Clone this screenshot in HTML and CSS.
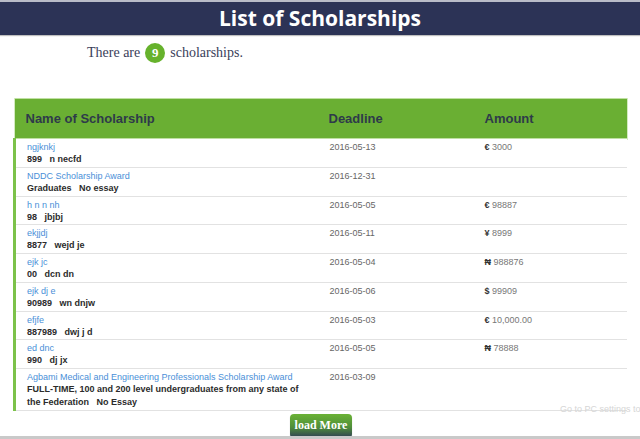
FILE: index.html
```html
<!DOCTYPE html>
<html lang="en">
<head>
<meta charset="utf-8">
<title>List of Scholarships</title>
<link rel="stylesheet" href="styles.css">
</head>
<body>
<header class="topbar"><h1 class="title">List of Scholarships</h1></header>
<p class="count">There are <span class="badge">9</span> scholarships.</p>
<div class="table-wrap">
  <table class="sch">
    <thead>
      <tr><th class="c-name">Name of Scholarship</th><th class="c-date">Deadline</th><th class="c-amt">Amount</th></tr>
    </thead>
    <tbody>
      <tr><td class="c-name"><a class="link">ngjknkj</a><div class="info">899&nbsp;&nbsp;&nbsp;n necfd</div></td><td class="c-date">2016-05-13</td><td class="c-amt"><b>€</b> 3000</td></tr>
      <tr><td class="c-name"><a class="link">NDDC Scholarship Award</a><div class="info">Graduates&nbsp;&nbsp;&nbsp;No essay</div></td><td class="c-date">2016-12-31</td><td class="c-amt"></td></tr>
      <tr><td class="c-name"><a class="link">h n n nh</a><div class="info">98&nbsp;&nbsp;&nbsp;jbjbj</div></td><td class="c-date">2016-05-05</td><td class="c-amt"><b>€</b> 98887</td></tr>
      <tr><td class="c-name"><a class="link">ekjjdj</a><div class="info">8877&nbsp;&nbsp;&nbsp;wejd je</div></td><td class="c-date">2016-05-11</td><td class="c-amt"><b>¥</b> 8999</td></tr>
      <tr><td class="c-name"><a class="link">ejk jc</a><div class="info">00&nbsp;&nbsp;&nbsp;dcn dn</div></td><td class="c-date">2016-05-04</td><td class="c-amt"><b>₦</b> 988876</td></tr>
      <tr><td class="c-name"><a class="link">ejk dj e</a><div class="info">90989&nbsp;&nbsp;&nbsp;wn dnjw</div></td><td class="c-date">2016-05-06</td><td class="c-amt"><b>$</b> 99909</td></tr>
      <tr><td class="c-name"><a class="link">efjfe</a><div class="info">887989&nbsp;&nbsp;&nbsp;dwj j d</div></td><td class="c-date">2016-05-03</td><td class="c-amt"><b>€</b> 10,000.00</td></tr>
      <tr><td class="c-name"><a class="link">ed dnc</a><div class="info">990&nbsp;&nbsp;&nbsp;dj jx</div></td><td class="c-date">2016-05-05</td><td class="c-amt"><b>₦</b> 78888</td></tr>
      <tr><td class="c-name"><a class="link">Agbami Medical and Engineering Professionals Scholarship Award</a><div class="info">FULL-TIME, 100 and 200 level undergraduates from any state of the Federation&nbsp;&nbsp;&nbsp;No Essay</div></td><td class="c-date">2016-03-09</td><td class="c-amt"></td></tr>
    </tbody>
  </table>
</div>
<div class="more-row"><button class="more">load More</button></div>
<div class="watermark">Go to PC settings to</div>
<div class="scrollbar"></div>
</body>
</html>
```

FILE: styles.css
```css
html, body { margin: 0; padding: 0; background: #fff; }
body { font-family: "Liberation Sans", Arial, sans-serif; position: relative; height: 439px; overflow: hidden; }

.topbar {
  border-top: 2px solid #b9bcc8;
  background: #2c3356;
  height: 33px;
  display: flex;
  align-items: center;
  justify-content: center;
  box-shadow: 0 1px 1px rgba(0,0,0,0.25);
}
.title {
  margin: 0;
  color: #fff;
  font-family: "Open Sans", sans-serif;
  font-weight: 700;
  font-size: 21px;
  line-height: 1;
}

.count {
  margin: 7px 0 0 87px;
  display: flex;
  align-items: center;
  font-family: "Liberation Serif", "Times New Roman", serif;
  font-size: 14px;
  color: #3a3e5a;
  height: 22px;
}
.badge {
  display: inline-flex;
  align-items: center;
  justify-content: center;
  width: 20px;
  height: 20px;
  border-radius: 50%;
  background: #66b22c;
  color: #fff;
  font-weight: 700;
  font-size: 13px;
  margin: 0 5px 0 5px;
}

.table-wrap {
  margin: 34px 13px 0 13px;
  width: 614px;
}
.sch {
  width: 100%;
  border-collapse: collapse;
  table-layout: fixed;
}
.sch th {
  background: #6aaf33;
  color: #2e3a4a;
  font-weight: 700;
  font-size: 13px;
  text-align: left;
  height: 39px;
  padding: 0 0 0 11px;
  border: 1px solid #bfe0a2;
  border-left: none;
  border-right: none;
}
.sch thead tr { box-shadow: 0 0 0 1px #d4ebc0; }
.sch th.c-name { width: 295px; }
.sch th.c-date { width: 142px; padding-left: 8px; }
.sch th.c-amt { padding-left: 14px; }

.sch td {
  vertical-align: top;
  padding: 2px 0 1px 0;
  border-bottom: 1px solid #e2e2e2;
  font-size: 9px;
  background: #fff;
}
.sch td.c-name {
  border-left: 3px solid #7cc24a;
  padding-left: 11px;
  padding-right: 12px;
}
.sch td.c-date { color: #666; line-height: 12px; padding-left: 9px; }
.sch td.c-amt { color: #777; line-height: 12px; padding-left: 14px; }
.sch td.c-amt b { color: #333; }

.link {
  display: block;
  color: #4a8fd8;
  line-height: 12px;
}
.info {
  color: #2b2b2b;
  font-weight: 700;
  line-height: 12.75px;
}

.more-row {
  display: flex;
  justify-content: center;
  padding: 3px 0 0 2px;
}
.more {
  width: 62px;
  height: 24px;
  border: none;
  border-radius: 4px;
  background: linear-gradient(#6bb235 0%, #4f8e3a 55%, #2f3d55 100%);
  color: #fff;
  font-family: "Liberation Serif", "Times New Roman", serif;
  font-weight: 700;
  font-size: 12px;
  padding: 0;
  box-shadow: 0 1px 1px rgba(0,0,0,0.3);
}

.watermark {
  position: absolute;
  left: 560px;
  top: 404px;
  font-size: 9px;
  color: #d6d6d6;
  white-space: nowrap;
}
.scrollbar {
  position: absolute;
  left: 0;
  right: 0;
  bottom: 0;
  height: 3px;
  background: #c9c9c9;
}
```
